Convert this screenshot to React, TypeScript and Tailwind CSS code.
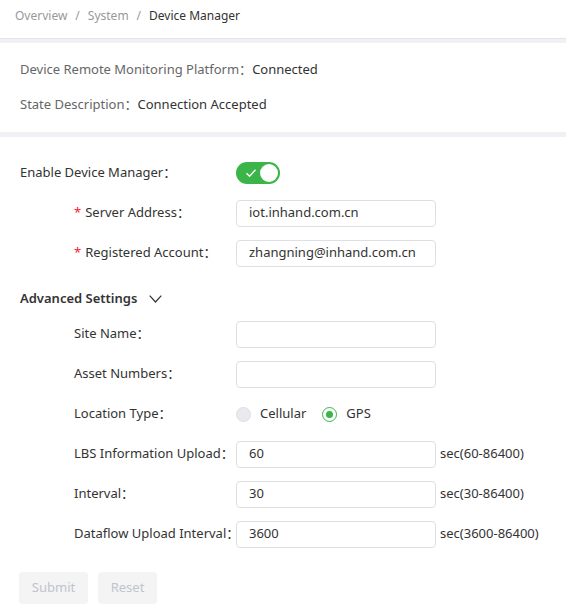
import { ReactNode } from 'react'

const font = { fontFamily: '"Noto Sans", "Noto Sans CJK SC", sans-serif' }

function Field({ label, required, children }: { label: string; required?: boolean; children: ReactNode }) {
  return (
    <div className="flex h-[40px] items-center pl-[54px]">
      <div className="w-[162px] shrink-0 whitespace-nowrap text-[13px] text-[#333]">
        {required && <span className="mr-[4px] text-[#f5222d]">*</span>}
        {label}：
      </div>
      <div className="flex items-center">{children}</div>
    </div>
  )
}

function TextInput({ value }: { value?: string }) {
  return (
    <div className="flex h-[27px] w-[200px] items-center rounded-[4px] border border-[#dcdfe6] bg-white px-[12px] text-[13px] text-[#333]">
      {value}
    </div>
  )
}

function Suffix({ children }: { children: ReactNode }) {
  return <span className="ml-[4px] whitespace-nowrap text-[13px] text-[#333]">{children}</span>
}

export default function App() {
  return (
    <div className="min-h-[616px] w-[566px] bg-white" style={font}>
      {/* breadcrumb */}
      <div className="flex h-[38px] items-center gap-[8px] px-[15px] pb-[6px] text-[12px] text-[#999]">
        <span>Overview</span>
        <span>/</span>
        <span>System</span>
        <span>/</span>
        <span className="text-[#333]">Device Manager</span>
      </div>
      <div className="h-[5px] border-t border-[#e4e4e8] bg-[#f0f1f5]" />

      {/* status */}
      <div className="flex flex-col px-[20px] pt-[16px] pb-[16px] text-[13px]">
        <div className="flex h-[22px] items-center">
          <span className="text-[#666]">Device Remote Monitoring Platform：</span>
          <span className="text-[#333]">Connected</span>
        </div>
        <div className="mt-[13px] flex h-[22px] items-center">
          <span className="text-[#666]">State Description：</span>
          <span className="text-[#333]">Connection Accepted</span>
        </div>
      </div>
      <div className="h-[5px] bg-[#f0f1f5]" />

      {/* form */}
      <div className="px-[20px] pt-[16px]">
        <div className="flex h-[40px] items-center">
          <div className="w-[216px] shrink-0 text-[13px] text-[#333]">Enable Device Manager：</div>
          <div className="flex h-[22px] w-[44px] items-center justify-between rounded-full bg-[#3bb44a] pl-[9px] pr-[2px]">
            <svg width="12" height="12" viewBox="0 0 12 12" fill="none">
              <path d="M1.5 6.2 L4.6 9.2 L10.5 2.8" stroke="white" strokeWidth="1.4" />
            </svg>
            <div className="h-[18px] w-[18px] rounded-full bg-white" />
          </div>
        </div>
        <Field label="Server Address" required>
          <TextInput value="iot.inhand.com.cn" />
        </Field>
        <Field label="Registered Account" required>
          <TextInput value="zhangning@inhand.com.cn" />
        </Field>

        <div className="mt-[16px] flex h-[20px] items-center gap-[12px] text-[13px] font-semibold text-[#333]">
          <span>Advanced Settings</span>
          <svg width="13" height="8" viewBox="0 0 13 8" fill="none">
            <path d="M0.7 0.7 L6.5 7 L12.3 0.7" stroke="#333" strokeWidth="1.2" />
          </svg>
        </div>

        <div className="mt-[5px]">
          <Field label="Site Name">
            <TextInput />
          </Field>
          <Field label="Asset Numbers">
            <TextInput />
          </Field>
          <Field label="Location Type">
            <div className="flex items-center text-[13px] text-[#333]">
              <span className="h-[15px] w-[15px] rounded-full border border-[#dcdfe6] bg-[#e9e9ee]" />
              <span className="ml-[9px]">Cellular</span>
              <span className="ml-[16px] flex h-[15px] w-[15px] items-center justify-center rounded-full border border-[#3bb44a] bg-white">
                <span className="h-[7px] w-[7px] rounded-full bg-[#3bb44a]" />
              </span>
              <span className="ml-[9px]">GPS</span>
            </div>
          </Field>
          <Field label="LBS Information Upload">
            <TextInput value="60" />
            <Suffix>sec(60-86400)</Suffix>
          </Field>
          <Field label="Interval">
            <TextInput value="30" />
            <Suffix>sec(30-86400)</Suffix>
          </Field>
          <Field label="Dataflow Upload Interval">
            <TextInput value="3600" />
            <Suffix>sec(3600-86400)</Suffix>
          </Field>
        </div>

        <div className="mt-[18px] -ml-[1px] flex gap-[10px]">
          <button className="h-[32px] w-[69px] rounded-[4px] bg-[#f4f4f5] text-[13px] text-[#c0c4cc]">Submit</button>
          <button className="h-[32px] w-[59px] rounded-[4px] bg-[#f4f4f5] text-[13px] text-[#c0c4cc]">Reset</button>
        </div>
      </div>
    </div>
  )
}
